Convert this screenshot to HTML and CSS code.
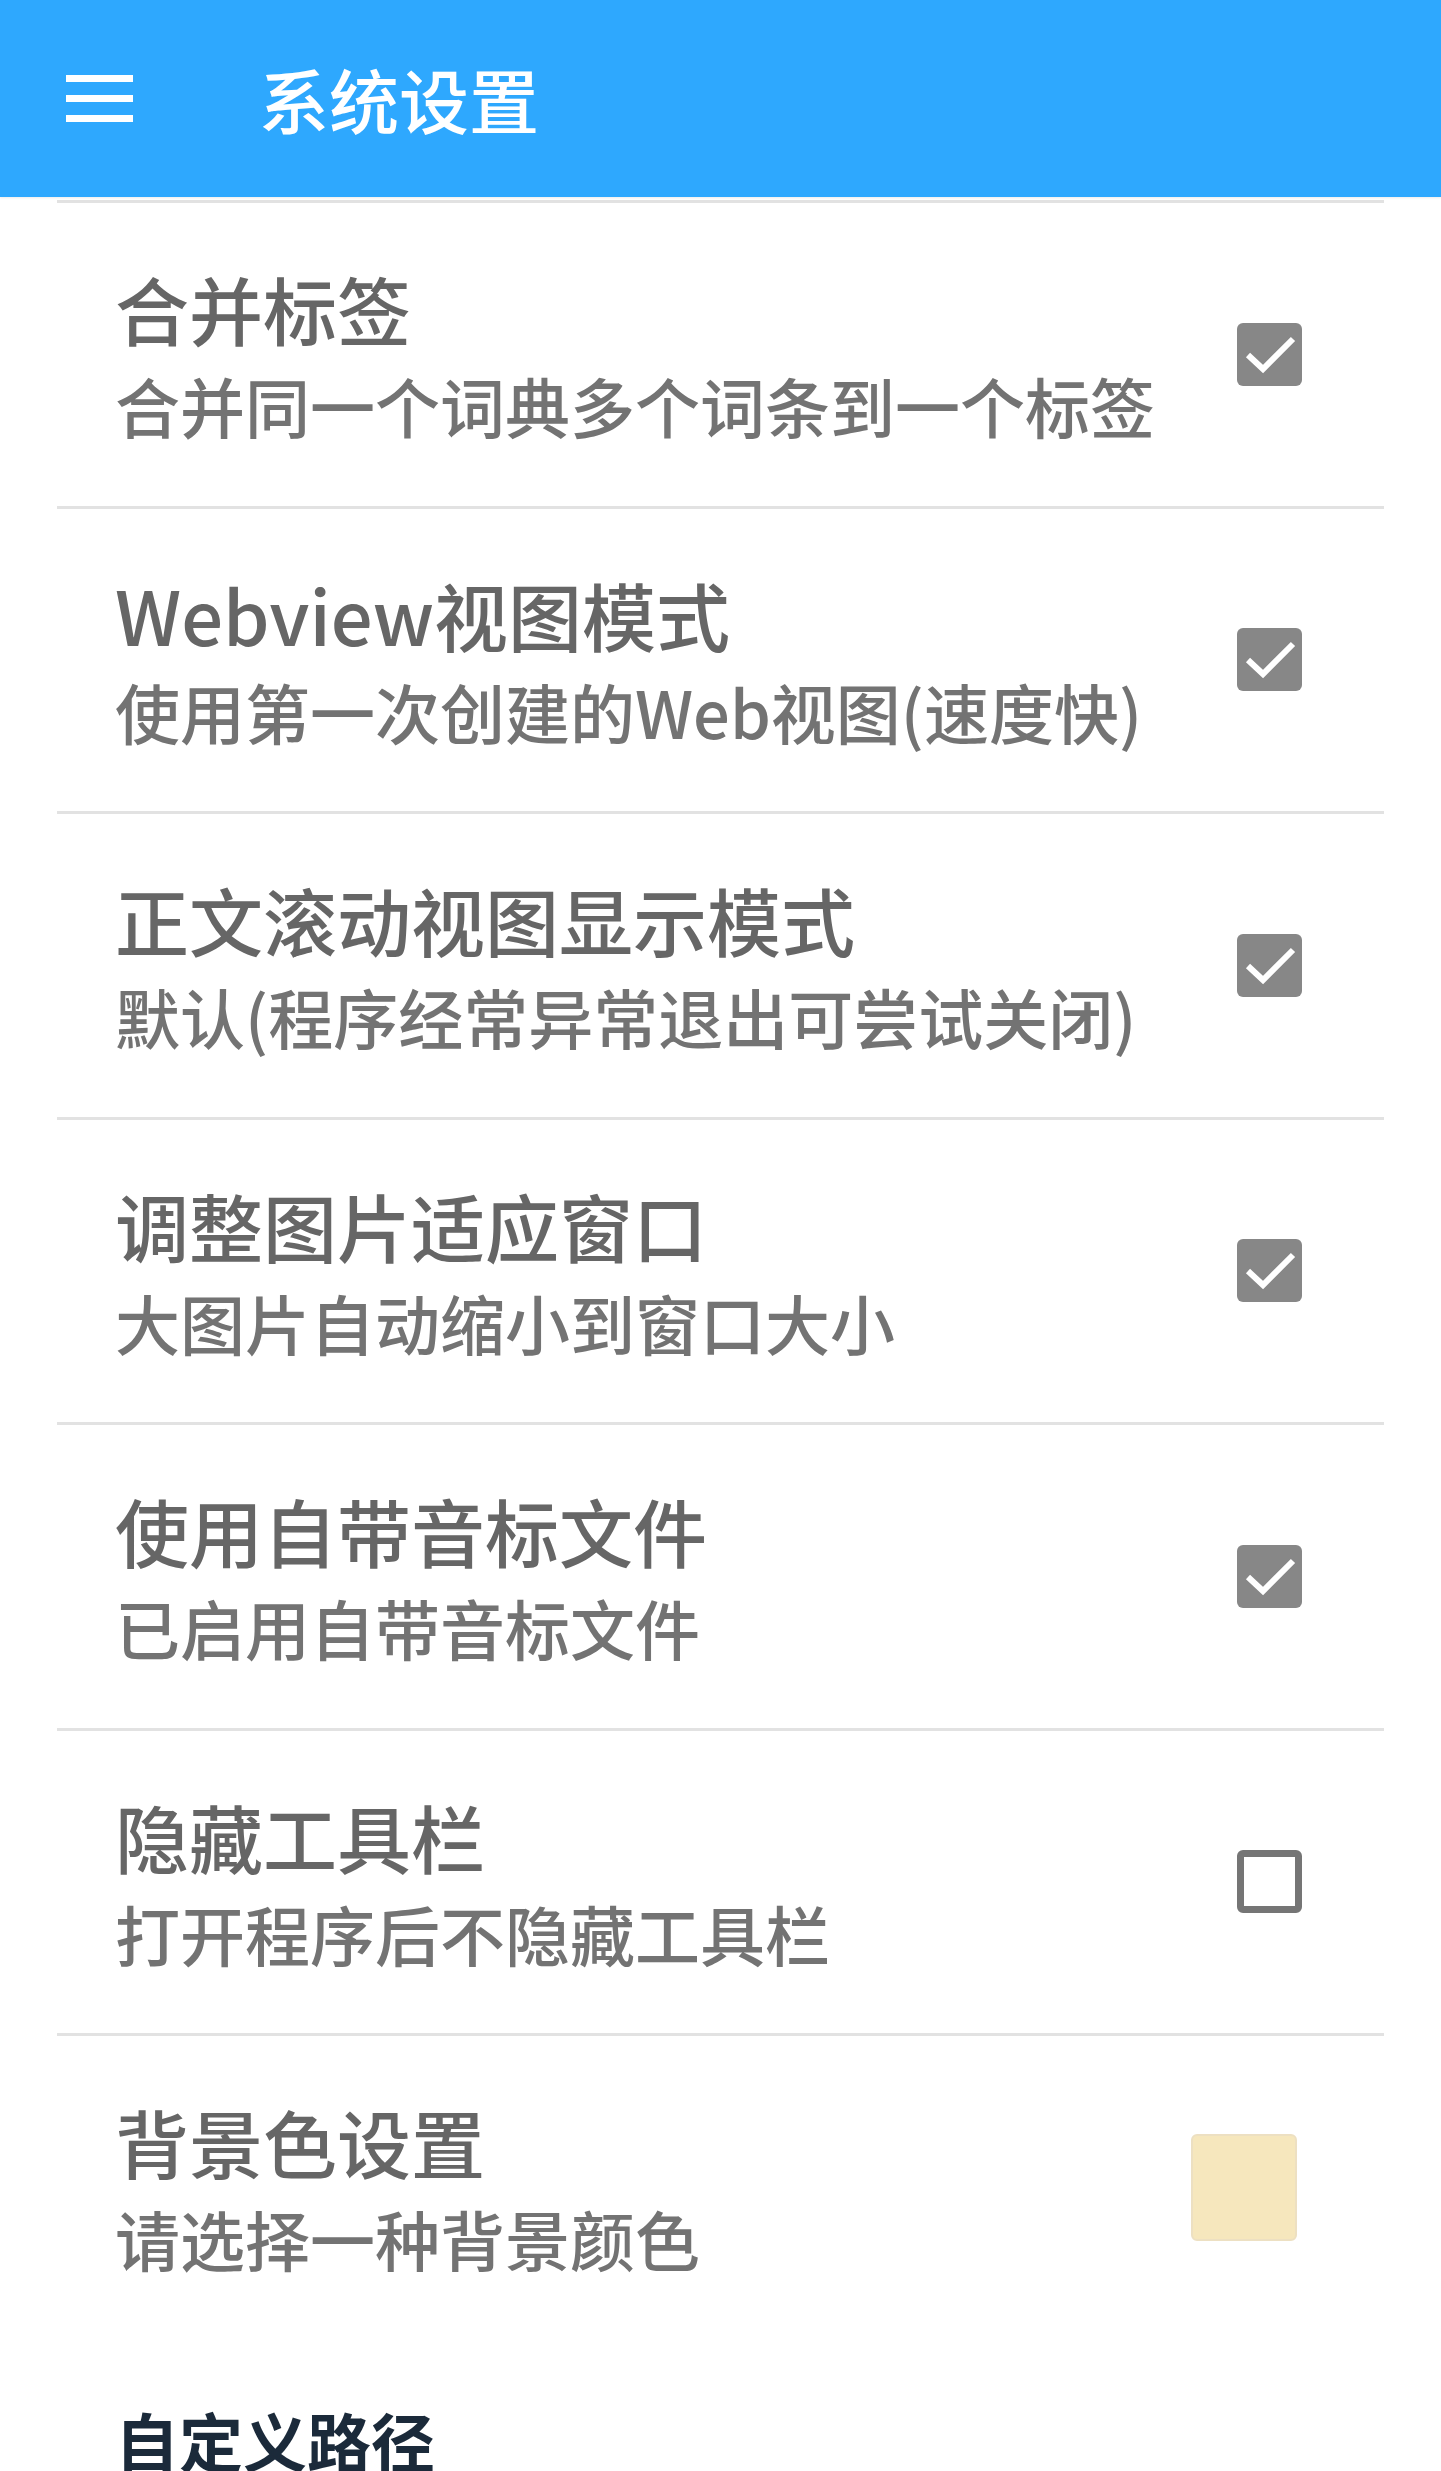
FILE: index.html
```html
<!doctype html>
<html lang="zh-CN">
<head>
    <meta charset="UTF-8">
    <meta name="viewport" content="width=device-width, initial-scale=1.0">
    <title>系统设置</title>
    <link rel="stylesheet" href="styles.css">
</head>
<body>
<header class="toolbar">
    <span class="menu_icon"><span></span><span></span><span></span></span>
    <h1 class="toolbar_title">系统设置</h1>
</header>

<div class="pref_list">
    <div class="pref_item">
        <div class="pref_text">
            <div class="pref_title">合并标签</div>
            <div class="pref_summary">合并同一个词典多个词条到一个标签</div>
        </div>
        <span class="checkbox checked">
            <svg viewBox="0 0 65 63"><path d="M11 32 L26 46 L56 16"/></svg>
        </span>
    </div>
    <div class="pref_item">
        <div class="pref_text">
            <div class="pref_title">Webview视图模式</div>
            <div class="pref_summary">使用第一次创建的Web视图(速度快)</div>
        </div>
        <span class="checkbox checked">
            <svg viewBox="0 0 65 63"><path d="M11 32 L26 46 L56 16"/></svg>
        </span>
    </div>
    <div class="pref_item">
        <div class="pref_text">
            <div class="pref_title">正文滚动视图显示模式</div>
            <div class="pref_summary">默认(程序经常异常退出可尝试关闭)</div>
        </div>
        <span class="checkbox checked">
            <svg viewBox="0 0 65 63"><path d="M11 32 L26 46 L56 16"/></svg>
        </span>
    </div>
    <div class="pref_item">
        <div class="pref_text">
            <div class="pref_title">调整图片适应窗口</div>
            <div class="pref_summary">大图片自动缩小到窗口大小</div>
        </div>
        <span class="checkbox checked">
            <svg viewBox="0 0 65 63"><path d="M11 32 L26 46 L56 16"/></svg>
        </span>
    </div>
    <div class="pref_item">
        <div class="pref_text">
            <div class="pref_title">使用自带音标文件</div>
            <div class="pref_summary">已启用自带音标文件</div>
        </div>
        <span class="checkbox checked">
            <svg viewBox="0 0 65 63"><path d="M11 32 L26 46 L56 16"/></svg>
        </span>
    </div>
    <div class="pref_item">
        <div class="pref_text">
            <div class="pref_title">隐藏工具栏</div>
            <div class="pref_summary">打开程序后不隐藏工具栏</div>
        </div>
        <span class="checkbox"></span>
    </div>
    <div class="pref_item">
        <div class="pref_text">
            <div class="pref_title">背景色设置</div>
            <div class="pref_summary">请选择一种背景颜色</div>
        </div>
        <span class="color_swatch"></span>
    </div>
</div>

<div class="pref_category">自定义路径</div>
</body>
</html>
```

FILE: styles.css
```css
body {
    margin: 0;
    background-color: #fff;
    font-family: "Noto Sans CJK SC", "Noto Sans", sans-serif;
    overflow: hidden;
}

.toolbar {
    display: flex;
    align-items: center;
    height: 197px;
    padding-left: 66px;
    background-color: #2ea8fe;
    box-shadow: 0 1px 2px rgba(0, 0, 0, 0.08);
}

.menu_icon {
    display: flex;
    flex-direction: column;
    gap: 13px;
    width: 67px;
}

.menu_icon span {
    display: block;
    height: 7px;
    background-color: #fff;
}

.toolbar_title {
    margin: 0 0 0 126px;
    color: #fff;
    font-size: 70px;
    font-weight: 500;
    line-height: 1.2;
}

.pref_list {
    margin: 3px 57px 0;
    border-top: 3px solid #e2e2e2;
}

.pref_item {
    display: flex;
    align-items: center;
    justify-content: space-between;
    height: 302.5px;
    padding: 0 82px 0 58px;
    border-bottom: 3px solid #e2e2e2;
}

.pref_item:last-child {
    border-bottom: none;
}

.pref_title {
    color: #666;
    font-size: 74px;
    font-weight: 500;
    line-height: 1.2;
    margin-bottom: 13px;
}

.pref_summary {
    color: #737373;
    font-size: 65px;
    font-weight: 500;
    line-height: 1.2;
}

.checkbox {
    box-sizing: border-box;
    width: 65px;
    height: 63px;
    border: 7px solid #757575;
    border-radius: 6px;
    flex-shrink: 0;
}

.checkbox.checked {
    border: none;
    background-color: #878787;
}

.checkbox svg {
    display: block;
    width: 65px;
    height: 63px;
}

.checkbox path {
    fill: none;
    stroke: #fff;
    stroke-width: 6;
}

.color_swatch {
    width: 106px;
    height: 107px;
    margin-right: 5px;
    box-sizing: border-box;
    background-color: #f6e7bd;
    border: 2px solid #ede0c2;
    border-radius: 6px;
    flex-shrink: 0;
}

.pref_category {
    margin: 62px 0 0 115px;
    color: #1b2a3a;
    font-size: 64px;
    font-weight: 700;
    line-height: 1.2;
}
```
